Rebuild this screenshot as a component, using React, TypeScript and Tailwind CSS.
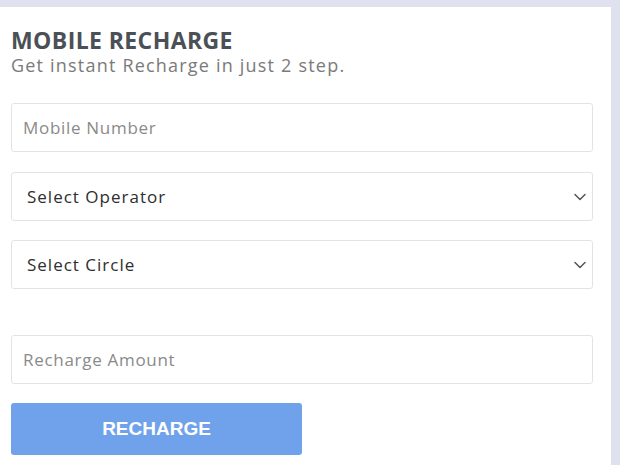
import { ChevronDown } from 'lucide-react'

const font = { fontFamily: '"Open Sans", "Liberation Sans", sans-serif' }

function TextField({ placeholder }: { placeholder: string }) {
  return (
    <input
      type="text"
      placeholder={placeholder}
      className="h-[49px] w-full rounded-[3px] border border-[#e3e3e6] bg-white px-[11px] text-[17px] tracking-[0.7px] text-[#333] outline-none placeholder:text-[#8a8a8a]"
    />
  )
}

function SelectField({ label }: { label: string }) {
  return (
    <div className="flex h-[49px] w-full items-center justify-between rounded-[3px] border border-[#e3e3e6] bg-white pl-[15px] pr-[2px]">
      <span className="text-[17px] tracking-[1px] text-[#2e2e2e]">{label}</span>
      <ChevronDown className="h-[20px] w-[20px] text-[#555]" strokeWidth={1.8} />
    </div>
  )
}

export default function App() {
  return (
    <div className="h-[465px] w-[620px] overflow-hidden bg-[#dfe1ee] pt-[7px] pr-[9px]" style={font}>
      <div className="h-full bg-white pl-[11px] pr-[18px] pt-[19px]">
        <h1 className="text-[23px] leading-[28px] font-bold tracking-[0.4px] text-[#4b4f56]">MOBILE RECHARGE</h1>
        <p className="text-[18px] leading-[22px] tracking-[1.2px] text-[#7a7a7a]">Get instant Recharge in just 2 step.</p>

        <div className="mt-[27px] flex flex-col">
          <TextField placeholder="Mobile Number" />
          <div className="mt-[20px]">
            <SelectField label="Select Operator" />
          </div>
          <div className="mt-[19px]">
            <SelectField label="Select Circle" />
          </div>
          <div className="mt-[46px]">
            <TextField placeholder="Recharge Amount" />
          </div>
          <button
            className="mt-[19px] h-[52px] w-[291px] rounded-[3px] bg-[#70a2ec] text-[19px] font-bold text-white"
            style={{ fontFamily: '"Liberation Sans", Arial, sans-serif' }}
          >
            RECHARGE
          </button>
        </div>
      </div>
    </div>
  )
}
